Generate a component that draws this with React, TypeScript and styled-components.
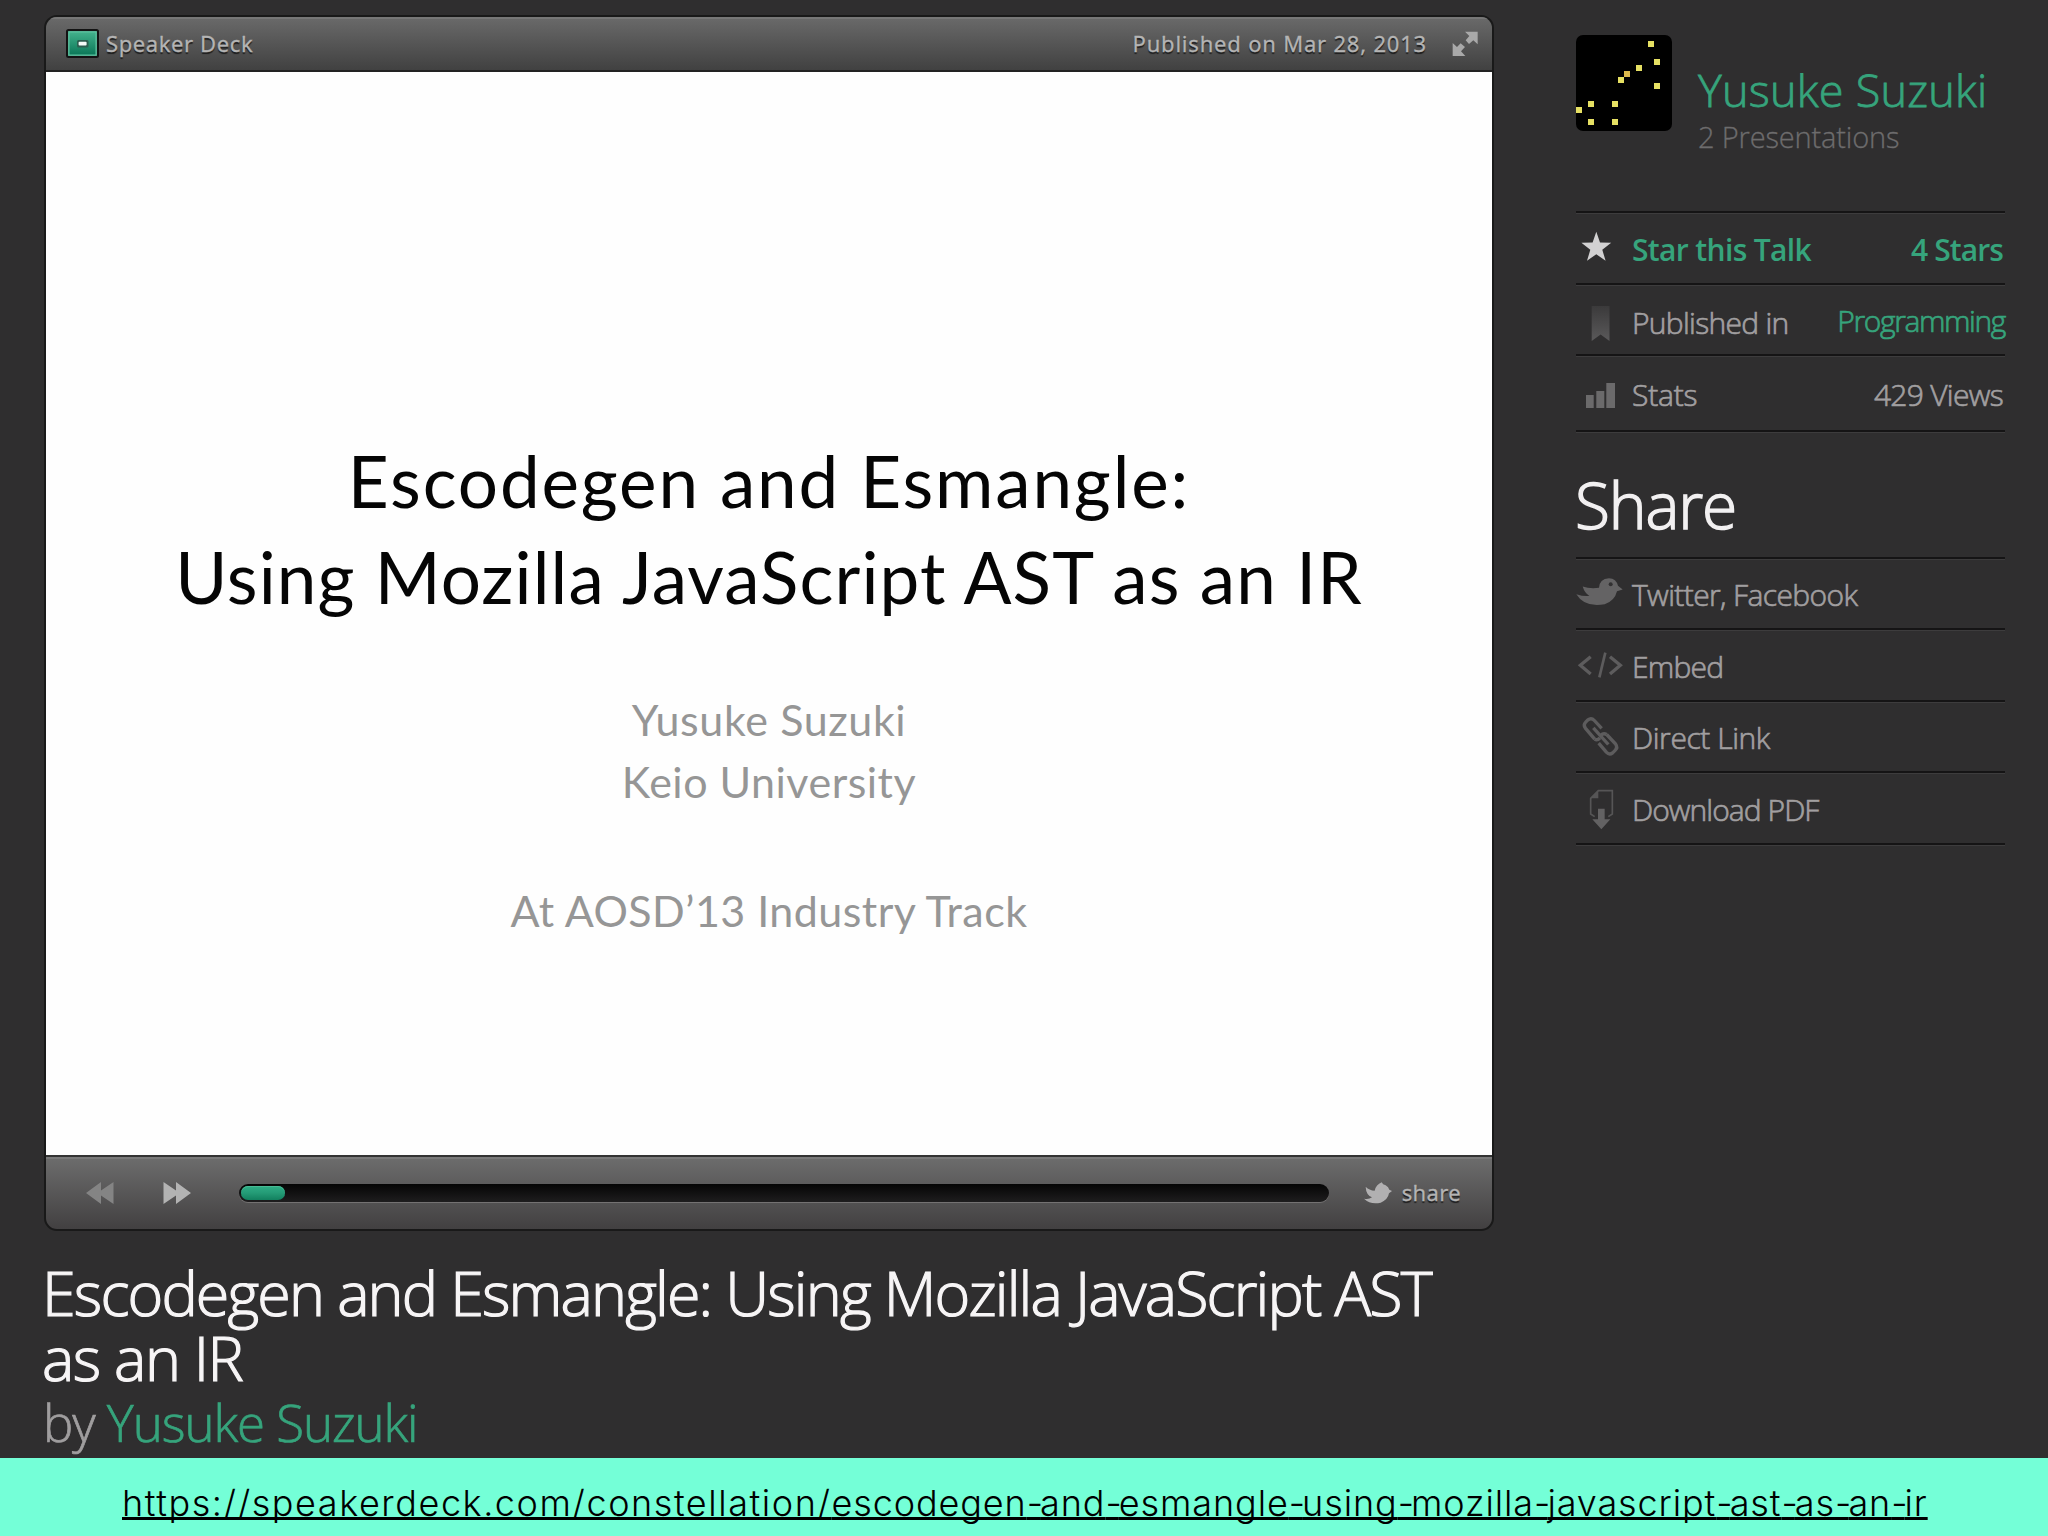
import React from "react";
import styled, { createGlobalStyle } from "styled-components";

const sans = `"Open Sans", "Noto Sans", sans-serif`;
const green = "#36a47c";

const GlobalStyle = createGlobalStyle`
  *, *::before, *::after { box-sizing: border-box; }
  body { margin: 0; background: #2f2e2f; }
`;

const Page = styled.div`
  width: 2048px;
  height: 1536px;
  overflow: hidden;
  display: flex;
  flex-direction: column;
  background: #2f2e2f;
  font-family: ${sans};
`;

const Columns = styled.div`
  height: 1458px;
  display: grid;
  grid-template-columns: 1450px 429px;
  column-gap: 82px;
  padding: 15px 43px 0 44px;
`;

const Main = styled.main`
  display: flex;
  flex-direction: column;
`;

const Player = styled.section`
  height: 1216px;
  display: flex;
  flex-direction: column;
  border: 2px solid #191919;
  border-radius: 13px;
  overflow: hidden;
  background: #191919;
`;

const PlayerHeader = styled.header`
  height: 55px;
  display: flex;
  align-items: center;
  padding: 2px 14px 2px 20px;
  border-bottom: 2px solid #222;
  background: linear-gradient(#6a6a6a, #414141);
  box-shadow: inset 0 2px 0 #777;
`;

const PlayerText = styled.span<{ $track?: number }>`
  padding-bottom: 2px;
  font-family: "Noto Sans", ${sans};
  font-size: 22px;
  line-height: 32px;
  letter-spacing: ${(p) => p.$track ?? 0}px;
  color: #b4b4b4;
  text-shadow: 0 2px 1px rgba(0, 0, 0, 0.65);
  -webkit-text-stroke: 0.3px #b4b4b4;
  white-space: nowrap;
`;

const Brand = styled.div`
  display: flex;
  align-items: center;
  gap: 7px;
  margin-right: auto;
`;

const DateLine = styled.div`
  display: flex;
  align-items: center;
  gap: 25px;
`;

const Slide = styled.div`
  height: 1083px;
  padding-top: 361px;
  display: flex;
  flex-direction: column;
  align-items: center;
  background: #fefefe;
  font-family: Lato, "Open Sans", sans-serif;
  text-align: center;
`;

const SlideTitle = styled.div<{ $track: number }>`
  font-size: 71px;
  line-height: 96px;
  letter-spacing: ${(p) => p.$track}px;
  color: #050505;
  white-space: nowrap;
`;

const SlideLine = styled.div<{ $track: number; $gap?: number }>`
  margin-top: ${(p) => p.$gap ?? 0}px;
  font-size: 43px;
  line-height: 62px;
  letter-spacing: ${(p) => p.$track}px;
  color: #969696;
  white-space: nowrap;
`;

const PlayerFooter = styled.footer`
  height: 74px;
  display: flex;
  align-items: center;
  padding: 0 31px 0 40px;
  border-top: 2px solid #333;
  background: linear-gradient(#6d6d6d, #424041);
  box-shadow: inset 0 2px 0 #7a7a7a;
`;

const Controls = styled.div`
  display: flex;
  gap: 49px;
`;

const Track = styled.div`
  width: 1090px;
  height: 18px;
  margin-left: 48px;
  padding: 2px;
  display: flex;
  border-radius: 9px;
  background: linear-gradient(#050505, #1e1d1e);
  box-shadow: 0 1px 0 #747272;
`;

const Progress = styled.div`
  width: 44px;
  border-radius: 7px;
  background: linear-gradient(#2fae86, #249b76 50%, #12805e);
  box-shadow: inset 0 1px 0 #48bb95;
`;

const ShareButton = styled.div`
  display: flex;
  align-items: center;
  gap: 10px;
  margin-left: auto;
`;

const Title = styled.h1`
  margin: 29px 0 0 -2px;
  font-size: 61px;
  font-weight: 300;
  line-height: 65px;
  letter-spacing: -1.86px;
  color: #f7f5f6;
  -webkit-text-stroke: 1.2px #f7f5f6;
  white-space: nowrap;
`;

const TitleTail = styled.span`
  letter-spacing: -1.5px;
`;

const Byline = styled.div`
  margin-left: -1px;
  font-size: 51px;
  font-weight: 300;
  line-height: 65px;
  letter-spacing: -1.07px;
  color: #a09e9f;
  -webkit-text-stroke: 0.7px currentColor;
  white-space: nowrap;
`;

const Accent = styled.span`
  color: ${green};
  -webkit-text-stroke-color: ${green};
`;

const Sidebar = styled.aside`
  display: flex;
  flex-direction: column;
`;

const Profile = styled.div`
  height: 196px;
  display: flex;
  padding-top: 20px;
  gap: 26px;
`;

const ProfileText = styled.div`
  padding-top: 30px;
`;

const Name = styled.div`
  font-size: 45px;
  font-weight: 300;
  line-height: 50px;
  letter-spacing: 0.23px;
  color: ${green};
  -webkit-text-stroke: 0.8px ${green};
  white-space: nowrap;
`;

const Count = styled.div`
  font-size: 29px;
  font-weight: 300;
  line-height: 43px;
  letter-spacing: -0.16px;
  color: #6d6c6d;
  -webkit-text-stroke: 0.3px #6d6c6d;
`;

const List = styled.div`
  border-top: 2px solid #151415;
  box-shadow: inset 0 1px 0 #3d3c3d;
`;

const Row = styled.div<{ $h: number }>`
  height: ${(p) => p.$h}px;
  display: flex;
  align-items: center;
  padding-top: 2px;
  border-bottom: 2px solid #151415;
  box-shadow: 0 1px 0 #3d3c3d;
`;

const Label = styled.span<{ $track: number; $strong?: boolean; $drop?: number }>`
  padding-top: ${(p) => p.$drop ?? 1}px;
  margin-right: auto;
  font-size: 30px;
  font-weight: ${(p) => (p.$strong ? 600 : 300)};
  line-height: 42px;
  letter-spacing: ${(p) => p.$track}px;
  color: ${(p) => (p.$strong ? green : "#a19fa0")};
  -webkit-text-stroke: ${(p) => (p.$strong ? 0 : 0.7)}px currentColor;
  white-space: nowrap;
`;

const Value = styled(Label)<{ $link?: boolean; $inset?: number }>`
  margin-right: ${(p) => p.$inset ?? 0}px;
  color: ${(p) => (p.$strong || p.$link ? green : "#a19fa0")};
`;

const ShareHeading = styled.h2`
  margin: 0 0 0 -1px;
  height: 125px;
  padding-top: 33px;
  font-size: 64px;
  font-weight: 300;
  line-height: 80px;
  letter-spacing: -1.1px;
  color: #f2f0f1;
  -webkit-text-stroke: 1.4px #f2f0f1;
`;

const Glyph = styled.svg`
  width: 56px;
  height: 48px;
  flex: none;
  overflow: visible;
`;

const LinkBand = styled.div`
  height: 78px;
  padding: 12px 0 0 122px;
  display: flex;
  align-items: center;
  background: #74ffd7;
`;

const Url = styled.a`
  font-family: Inter, "Liberation Sans", sans-serif;
  font-size: 36px;
  font-weight: 300;
  line-height: 44px;
  letter-spacing: 0.89px;
  color: #000;
  text-decoration: underline;
  text-decoration-thickness: 2.5px;
  text-decoration-skip-ink: none;
  text-underline-offset: 1px;
  white-space: nowrap;
`;

const UrlPath = styled.span`
  letter-spacing: 1.55px;
`;

const Hyphen = styled.span`
  letter-spacing: -2.9px;
`;

const pixels = [
  [12, 1], [13, 4], [10, 5], [8, 6], [7, 7], [13, 8],
  [2, 11], [6, 11], [0, 12], [2, 14], [6, 14],
];

const Avatar = () => (
  <svg width="96" height="96" viewBox="0 0 96 96">
    <rect width="96" height="96" rx="7" fill="#000" />
    {pixels.map(([x, y]) => (
      <rect key={`${x}-${y}`} x={x * 6} y={y * 6} width="6" height="6" fill={x === 8 ? "#dcb94c" : "#e6e063"} />
    ))}
  </svg>
);

const Logo = () => (
  <svg width="33" height="29" viewBox="0 0 33 29">
    <defs>
      <linearGradient id="logo" x1="0" y1="0" x2="0" y2="1">
        <stop offset="0" stopColor="#43b18c" />
        <stop offset="1" stopColor="#0a7757" />
      </linearGradient>
    </defs>
    <rect width="33" height="29" rx="2.5" fill="#131313" />
    <rect x="2.8" y="2.8" width="27.4" height="23.4" fill="url(#logo)" stroke="#5cc3a0" strokeWidth="1.4" />
    <rect x="11" y="11" width="11.5" height="7.5" rx="1.5" fill="#2c5f50" />
    <rect x="12.6" y="12.8" width="8" height="3.6" rx="1" fill="#f4fbf8" />
  </svg>
);

const ExpandIcon = () => (
  <svg width="26" height="26" viewBox="1057 93 78 78" fill="#a9a9a9">
    <path d="M1096 95H1134V133L1121 121L1108 132L1098 121L1109 108Z" />
    <path d="M1059 129L1072 141L1083 130L1096 141L1084 154L1097 168H1059Z" />
  </svg>
);

const Skip = ({ back = false }: { back?: boolean }) => (
  <svg width="28" height="22" viewBox="0 0 28 22" fill={back ? "#848484" : "#b3b3b3"}>
    <path
      transform={back ? "matrix(-1 0 0 1 28 0)" : undefined}
      d="M.5 0L13 8.6V0L28 11L13 22V13.4L.5 22Z"
    />
  </svg>
);

const SmallBird = () => (
  <svg width="28" height="22" viewBox="252 125 84 66" fill="#b1b0b1">
    <path d="M252 175Q266 178 276 171Q258 164 257 139Q268 150 284 151Q288 133 305 126Q308 133 317 135Q326 140 328 148L336 152L327 159Q324 178 302 187Q272 194 252 175Z" />
  </svg>
);

const StarIcon = () => (
  <Glyph viewBox="0 0 56 48" fill="#d2d1d2">
    <path d="M20.3 6.8L24 17.6L35.2 17.8L26.3 24.8L29.6 35.8L20.3 29.3L11 35.8L14.3 24.8L5.4 17.8L16.6 17.6Z" />
  </Glyph>
);

const BookmarkIcon = () => (
  <Glyph viewBox="0 0 56 48">
    <defs>
      <linearGradient id="mark" x1="0" y1="0" x2="0" y2="1">
        <stop offset="0" stopColor="#3b3a3b" />
        <stop offset="1" stopColor="#5a595a" />
      </linearGradient>
    </defs>
    <path d="M15.7 9H33.5V44L24.6 37.5L15.7 44Z" fill="url(#mark)" />
  </Glyph>
);

const BarsIcon = () => (
  <Glyph viewBox="0 0 56 48" fill="#6b6a6b">
    <rect x="10" y="25" width="7.7" height="13" />
    <rect x="20.3" y="21" width="8" height="17" />
    <rect x="30.3" y="13" width="8.7" height="25" />
  </Glyph>
);

const BirdIcon = () => (
  <Glyph viewBox="0 0 56 48">
    <g transform="translate(-26 -30.5) scale(.33333)">
      <path
        fill="#646364"
        d="M79 161Q103 169 118 166Q104 158 98 138Q120 146 147 142Q148 115 177 113Q199 114 204 136L218 147L201 152Q194 181 164 191Q104 202 79 161Z"
      />
      <circle cx="182" cy="131" r="6" fill="#323132" />
    </g>
  </Glyph>
);

const EmbedIcon = () => (
  <Glyph viewBox="0 0 56 48">
    <g transform="translate(-26 -102) scale(.33333)" fill="none" stroke="#5d5c5d" strokeWidth="10">
      <path d="M122 350L91 376L122 402" />
      <path d="M180 350L211 376L180 402" />
      <path d="M166 338L148 412" strokeWidth="8" />
    </g>
  </Glyph>
);

const LinkIcon = () => (
  <Glyph viewBox="0 0 56 48">
    <g transform="translate(-26 -173.5) scale(.33333)" fill="none" stroke="#5d5c5d" strokeWidth="10">
      <path d="M134 596L106 563Q99 553 107 545L114 538Q124 530 133 540L155 564" />
      <path d="M170 582L197 611Q204 621 196 629L188 637Q178 645 169 635L146 608" />
      <path d="M130 562L175 612" />
      <path d="M134 596Q142 601 150 592M170 582Q160 576 152 585" />
    </g>
  </Glyph>
);

const DownloadIcon = () => (
  <Glyph viewBox="0 0 56 48">
    <g transform="translate(-26 -245) scale(.33333)">
      <path d="M134 830L122 822V775L145 752H187V822L175 830" fill="none" stroke="#565556" strokeWidth="5" />
      <path d="M122 775L145 752V775Z" fill="#565556" />
      <path d="M144 806H164V838H181L154 868L127 838H144Z" fill="#636263" />
    </g>
  </Glyph>
);

const shareRows = [
  { label: "Twitter, Facebook", track: -0.62, h: 71, icon: <BirdIcon /> },
  { label: "Embed", track: -0.8, h: 72, icon: <EmbedIcon /> },
  { label: "Direct Link", track: -0.42, h: 71, icon: <LinkIcon /> },
  { label: "Download PDF", track: -0.95, h: 72, icon: <DownloadIcon /> },
];

const slug = "escodegen-and-esmangle-using-mozilla-javascript-ast-as-an-ir".split("-");

export default function App() {
  return (
    <>
      <GlobalStyle />
      <Page>
        <Columns>
          <Main>
            <Player>
              <PlayerHeader>
                <Brand>
                  <Logo />
                  <PlayerText $track={0.6}>Speaker Deck</PlayerText>
                </Brand>
                <DateLine>
                  <PlayerText $track={0.8}>Published on Mar 28, 2013</PlayerText>
                  <ExpandIcon />
                </DateLine>
              </PlayerHeader>
              <Slide>
                <SlideTitle $track={1.85}>Escodegen and Esmangle:</SlideTitle>
                <SlideTitle $track={1.1}>Using Mozilla JavaScript AST as an IR</SlideTitle>
                <SlideLine $track={0.62} $gap={64}>Yusuke Suzuki</SlideLine>
                <SlideLine $track={0.5}>Keio University</SlideLine>
                <SlideLine $track={0.45} $gap={67}>At AOSD’13 Industry Track</SlideLine>
              </Slide>
              <PlayerFooter>
                <Controls>
                  <Skip back />
                  <Skip />
                </Controls>
                <Track>
                  <Progress />
                </Track>
                <ShareButton>
                  <SmallBird />
                  <PlayerText $track={0.35}>share</PlayerText>
                </ShareButton>
              </PlayerFooter>
            </Player>
            <Title>
              Escodegen and Esmangle: Using Mozilla JavaScript AST
              <br />
              <TitleTail>as an IR</TitleTail>
            </Title>
            <Byline>
              by <Accent>Yusuke Suzuki</Accent>
            </Byline>
          </Main>
          <Sidebar>
            <Profile>
              <Avatar />
              <ProfileText>
                <Name>Yusuke Suzuki</Name>
                <Count>2 Presentations</Count>
              </ProfileText>
            </Profile>
            <List>
              <Row $h={72}>
                <StarIcon />
                <Label $strong $track={-0.64}>Star this Talk</Label>
                <Value $strong $track={-0.9} $inset={2}>4 Stars</Value>
              </Row>
              <Row $h={71}>
                <BookmarkIcon />
                <Label $track={-0.7} $drop={4}>Published in</Label>
                <Value $link $track={-1.4}>Programming</Value>
              </Row>
              <Row $h={76}>
                <BarsIcon />
                <Label $track={-0.2}>Stats</Label>
                <Value $track={-0.7} $inset={2}>429 Views</Value>
              </Row>
            </List>
            <ShareHeading>Share</ShareHeading>
            <List>
              {shareRows.map((r) => (
                <Row key={r.label} $h={r.h}>
                  {r.icon}
                  <Label $track={r.track}>{r.label}</Label>
                </Row>
              ))}
            </List>
          </Sidebar>
        </Columns>
        <LinkBand>
          <Url>
            <UrlPath>https://speakerdeck.com/constellation/</UrlPath>
            {slug.map((word, i) => (
              <React.Fragment key={word}>
                {i > 0 && <Hyphen>-</Hyphen>}
                {word}
              </React.Fragment>
            ))}
          </Url>
        </LinkBand>
      </Page>
    </>
  );
}
